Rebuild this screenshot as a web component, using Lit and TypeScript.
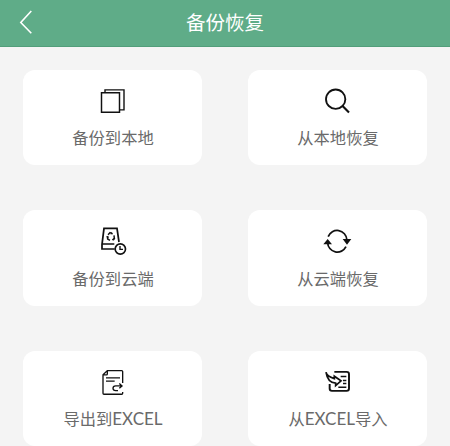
import { LitElement, html, css, svg } from "lit";
import { customElement } from "lit/decorators.js";

const icons = {
  copy: svg`<path d="M45 36V28H102V88H90" stroke-width="4.2"/><path d="M34.500 37H88.500V95.500H34.500Z" stroke-width="4.400"/>`,
  search: svg`<circle cx="62" cy="56" r="29" stroke-width="5.6"/><path d="M82 76L102 96" stroke-width="6.5"/>`,
  disk: svg`<path d="M74 87H36V73L42 25H81L87 66M37 72H73" stroke-width="5.2"/>
    <path d="M54 44L60 38L67 41M72 46L73 55L67 60M60 61L53 57L52 49" stroke-width="4.4"/>
    <path d="M65 36L69 43L61 43ZM76 54L69 56L71 63ZM48 50L55 47L56 55Z" class="solid"/>
    <circle cx="91" cy="87" r="15.5" stroke-width="5"/><path d="M90 78V88H99" stroke-width="4.2"/>`,
  sync: svg`<path d="M39.5 50A29 29 0 0 1 95.500 59M93 80A29 29 0 0 1 38 68" stroke-width="5.2"/>
    <path d="M83 57H109L96 74ZM25 73H51L38 57Z" class="solid"/>`,
  exportFile: svg`<path d="M98 63V29Q98 26 95 26H52L39 39V94Q39 97 42 97H95Q98 97 98 94V90M52 27V36Q52 39 49 39H40" stroke-width="4"/>
    <path d="M48 48H90M48 58H74" stroke-width="3.8"/>
    <path d="M84 86H77Q69 86 69 79Q69 72 77 72H95M88 65L96 72L88 79" stroke-width="4"/>`,
  importFile: svg`<path d="M58 30H95Q102 30 102 37V80Q102 87 95 87H51Q44 87 44 80V66" stroke-width="5.8"/>
    <path d="M33 31Q35 44 58 50V43L78 57L62 71V64Q38 63 33 31Z" stroke-width="5.2"/>
    <path d="M77 44H94M84 56H94M84 65H94M70 76H94" stroke-width="4.6"/>`,
};

const actions = [
  { icon: icons.copy, top: -1.5, label: html`备份到本地` },
  { icon: icons.search, top: -1.5, label: html`从本地恢复` },
  { icon: icons.disk, top: 0, label: html`备份到云端` },
  { icon: icons.sync, top: 0, label: html`从云端恢复` },
  { icon: icons.exportFile, top: -2.7, label: html`导出到<span class="latin">EXCEL</span>` },
  { icon: icons.importFile, top: -2.7, label: html`从<span class="latin">EXCEL</span>导入` },
];

@customElement("app-root")
export class AppRoot extends LitElement {
  static styles = css`
    :host {
      display: block;
      height: 446px;
      overflow: hidden;
      background: #f4f4f4;
      font-family: "Noto Sans CJK SC", sans-serif;
    }
    .bar {
      box-sizing: border-box;
      height: 46.5px;
      display: grid;
      grid-template-columns: 60px 1fr 60px;
      align-items: center;
      background: #5fac88;
      border-bottom: 1px solid #529e7a;
      color: #fff;
    }
    .back {
      width: 50px;
      height: 44px;
      fill: none;
      stroke: #fff;
      stroke-width: 1.6;
    }
    .title {
      margin: 0;
      padding-bottom: 2px;
      text-align: center;
      font-size: 19.5px;
      line-height: 42px;
      font-weight: 400;
    }
    .grid {
      display: grid;
      grid-template-columns: 179px 179px;
      grid-auto-rows: 95.3px;
      gap: 45.5px 46px;
      padding: 23px 23px 0;
    }
    .card {
      box-sizing: border-box;
      padding-top: 10px;
      border-radius: 12px;
      background: #fff;
      display: flex;
      flex-direction: column;
      align-items: center;
    }
    .icon {
      width: 45px;
      height: 40px;
      fill: none;
      stroke: #111;
      overflow: visible;
    }
    .solid {
      fill: #111;
      stroke: none;
    }
    .label {
      margin-top: 5.4px;
      padding-left: 1px;
      font-size: 16.3px;
      line-height: 24px;
      font-weight: 400;
      color: #6a6a6a;
      white-space: nowrap;
    }
    .latin {
      font-family: Lato, sans-serif;
      font-size: 17px;
    }
  `;

  render() {
    return html`
      <header class="bar">
        <svg class="back" viewBox="0 0 50 44"><path d="M31.300 10L20.800 21.500L31.300 32.300" /></svg>
        <h1 class="title">备份恢复</h1>
      </header>
      <main class="grid">
        ${actions.map(
          (a) => html`<div class="card">
            <svg class="icon" viewBox="0 ${a.top} 135 120">${a.icon}</svg>
            <div class="label">${a.label}</div>
          </div>`
        )}
      </main>
    `;
  }
}
